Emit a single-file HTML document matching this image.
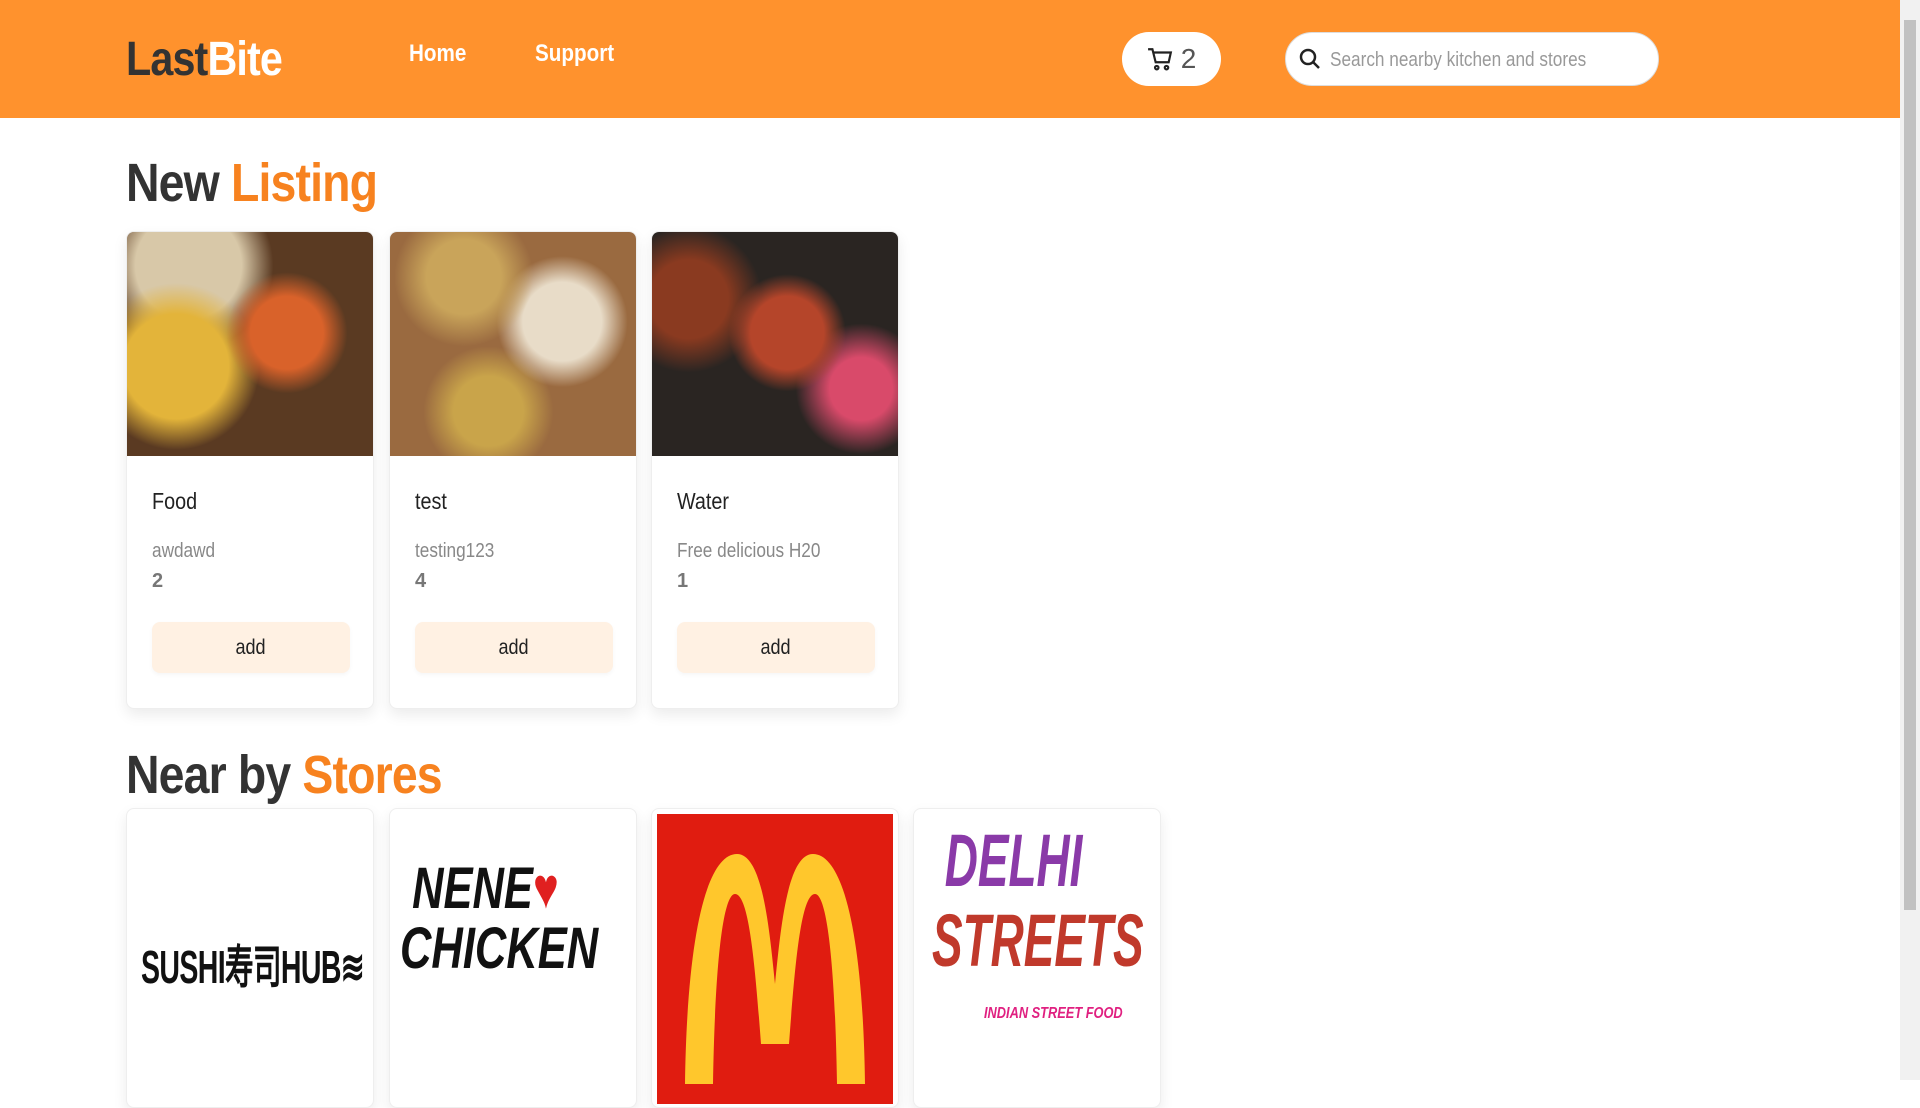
<!DOCTYPE html>
<html><head><meta charset="utf-8"><style>
*{box-sizing:border-box;margin:0;padding:0}
body{width:1920px;height:1080px;overflow:hidden;background:#fff;font-family:"Liberation Sans",sans-serif;position:relative}
.hdr{position:absolute;left:0;top:0;width:1900px;height:118px;background:#ff922d}
.sx{display:inline-block;transform:scaleX(.86);transform-origin:left;white-space:nowrap}
.logo{position:absolute;left:126px;top:32px;font-size:48px;font-weight:bold;color:#333;letter-spacing:-1px}
.logo span{color:#fff}
.nav{position:absolute;top:40px;font-size:24px;font-weight:bold;color:#fff}
.cart{position:absolute;left:1122px;top:32px;width:99px;height:54px;background:#fff;border-radius:27px;display:flex;align-items:center;justify-content:center;gap:8px;font-size:28px;color:#555}
.search{position:absolute;left:1285px;top:32px;width:374px;height:54px;background:#fff;border-radius:27px;border:1px solid #ddd}
.search span{position:absolute;left:44px;top:16px;font-size:20px;color:#999}
.sb{position:absolute;left:1900px;top:0;width:20px;height:1080px;background:#f1f1f1}
.sb div{position:absolute;left:4px;top:20px;width:12px;height:890px;background:#c1c1c1}
h2{position:absolute;left:126px;font-size:54px;font-weight:bold;color:#333;letter-spacing:-1px}
h2 span span{color:#f7821f}
.card{position:absolute;width:248px;background:#fff;border:1px solid #eee;border-radius:8px;box-shadow:0 6px 14px rgba(0,0,0,.08);overflow:hidden}
.img{height:224px}
.t{position:absolute;left:25px;top:256px;font-size:23px;color:#222}
.d{position:absolute;left:25px;top:308px;font-size:20px;color:#888}
.n{position:absolute;left:25px;top:338px;font-size:20px;font-weight:bold;color:#777}
.btn{position:absolute;left:25px;top:390px;width:198px;height:51px;background:#fff1e3;border-radius:8px;font-size:21px;color:#222;text-align:center;line-height:51px;box-shadow:0 2px 4px rgba(0,0,0,.04)}
.btn .sx{transform-origin:center}
</style></head><body>
<div class="hdr">
<div class="logo"><span class="sx" style="color:#333">Last<span>Bite</span></span></div>
<div class="nav" style="left:409px"><span class="sx">Home</span></div>
<div class="nav" style="left:535px"><span class="sx">Support</span></div>
<div class="cart"><svg width="26" height="26" viewBox="0 0 24 24" fill="none" stroke="#222" stroke-width="2"><path d="M1 3h4l3 12h12l2-9H6"/><circle cx="9" cy="20" r="1.6"/><circle cx="18" cy="20" r="1.6"/></svg>2</div>
<div class="search"><svg style="position:absolute;left:12px;top:14px" width="24" height="24" viewBox="0 0 24 24" fill="none" stroke="#222" stroke-width="2.5"><circle cx="10" cy="10" r="7"/><path d="M15 15l6 6"/></svg><span class="sx">Search nearby kitchen and stores</span></div>
</div>
<div class="sb"><div></div></div>
<h2 style="top:152px"><span class="sx">New <span>Listing</span></span></h2>
<div class="card" style="left:126px;top:231px;height:478px"><div class="img" style="background:radial-gradient(circle at 65% 45%,#d9622a 0 18%,transparent 30%),radial-gradient(circle at 20% 60%,#e3b43a 0 22%,transparent 35%),radial-gradient(circle at 25% 15%,#d8c8a8 0 20%,transparent 32%),#5a3a22"></div><div class="t"><span class="sx">Food</span></div><div class="d"><span class="sx">awdawd</span></div><div class="n">2</div><div class="btn"><span class="sx">add</span></div></div>
<div class="card" style="left:389px;top:231px;height:478px"><div class="img" style="background:radial-gradient(circle at 30% 20%,#c9a45a 0 15%,transparent 28%),radial-gradient(circle at 70% 40%,#e8dcc8 0 18%,transparent 30%),radial-gradient(circle at 40% 80%,#c9a44a 0 15%,transparent 28%),#9a6a40"></div><div class="t"><span class="sx">test</span></div><div class="d"><span class="sx">testing123</span></div><div class="n">4</div><div class="btn"><span class="sx">add</span></div></div>
<div class="card" style="left:651px;top:231px;height:478px"><div class="img" style="background:radial-gradient(circle at 55% 45%,#b5452a 0 20%,transparent 32%),radial-gradient(circle at 15% 30%,#8a3a20 0 15%,transparent 28%),radial-gradient(circle at 85% 70%,#d94a6a 0 12%,transparent 25%),#2a2522"></div><div class="t"><span class="sx">Water</span></div><div class="d"><span class="sx">Free delicious H20</span></div><div class="n">1</div><div class="btn"><span class="sx">add</span></div></div>
<h2 style="top:744px"><span class="sx">Near by <span>Stores</span></span></h2>
<div class="card" style="left:126px;top:808px;height:300px"><div style="position:absolute;left:14px;top:122px;font-size:46px;font-weight:bold;color:#111;transform:scaleX(.62);transform-origin:left;white-space:nowrap;letter-spacing:-1px">SUSHI寿司HUB≋</div></div>
<div class="card" style="left:389px;top:808px;height:300px"><div style="position:absolute;left:10px;top:50px;font-size:58px;font-weight:bold;font-style:italic;color:#111;line-height:60px;transform:scaleX(.75);transform-origin:left;white-space:nowrap">&nbsp;NENE<span style="color:#e02020">♥</span><br>CHICKEN</div></div>
<div class="card" style="left:651px;top:808px;height:300px"><div style="position:absolute;left:5px;top:5px;width:236px;height:290px;background:#e01c10"><svg width="236" height="290" viewBox="0 0 236 290"><path d="M28 270 C30 120 50 40 80 40 C105 40 112 110 118 170 C124 110 131 40 156 40 C186 40 206 120 208 270 L180 270 C178 150 170 80 158 80 C144 80 138 150 132 230 L104 230 C98 150 92 80 78 80 C66 80 58 150 56 270Z" fill="#ffc72c"/></svg></div></div>
<div class="card" style="left:913px;top:808px;height:300px"><div style="position:absolute;left:18px;top:12px;font-size:74px;font-weight:bold;font-style:italic;color:#8a3aa8;line-height:80px;transform:scaleX(.62);transform-origin:left;white-space:nowrap">&nbsp;DELHI<br><span style="color:#c0392b">STREETS</span></div><div style="position:absolute;left:70px;top:196px;font-size:16px;font-weight:bold;font-style:italic;color:#e02080;transform:scaleX(.8);transform-origin:left;white-space:nowrap">INDIAN STREET FOOD</div></div>
</body></html>
